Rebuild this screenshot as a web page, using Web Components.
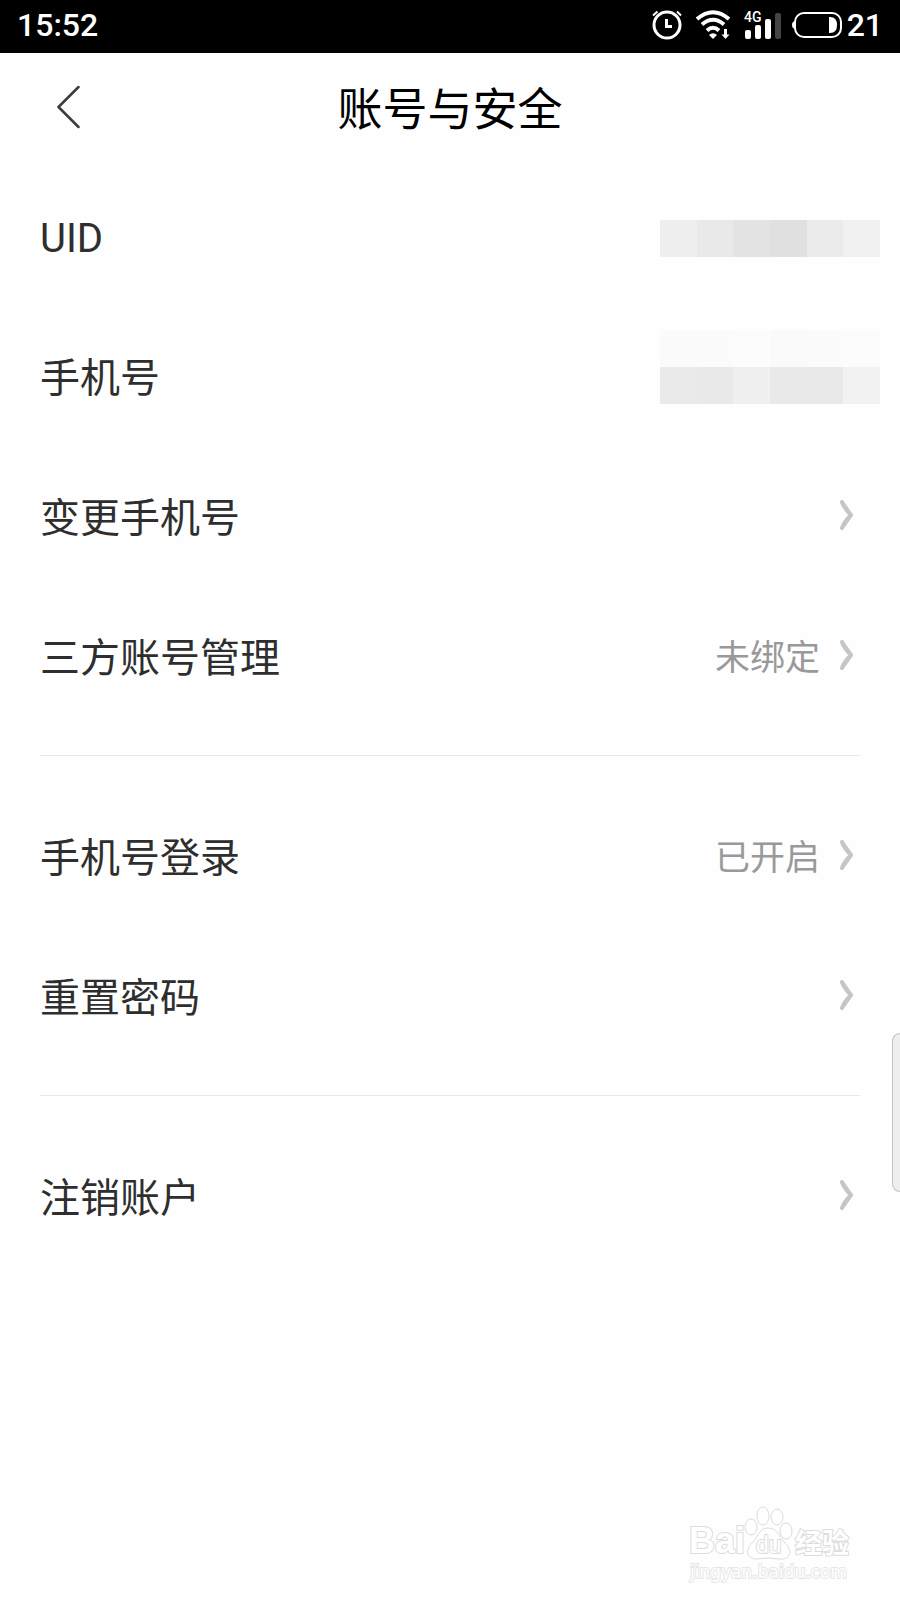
<!DOCTYPE html>
<html lang="zh-CN">
<head>
<meta charset="utf-8">
<meta name="viewport" content="width=device-width, initial-scale=1">
<title>账号与安全</title>
<style>
    body {
        margin: 0;
        background: #fefefe;
        font-family: Roboto, "Noto Sans CJK SC", sans-serif;
    }
</style>
</head>
<body>
<account-page>
    <status-bar slot="status" time="15:52" battery="21"></status-bar>
    <page-header slot="header">账号与安全</page-header>
    <setting-group>
        <setting-row>UID
            <mosaic-block class="uid" slot="value" colors="#eeeeee #e9e9e9 #e3e3e3 #e0e0e0 #ebebeb #f1f1f1"></mosaic-block>
        </setting-row>
        <setting-row>手机号
            <mosaic-block class="phone" slot="value" colors="#fbfbfb #fbfbfb #fcfcfc #fafafa #fbfbfb #fcfcfc #eaeaea #e9e9e9 #f0f0f0 #e9e9e9 #e9e9e9 #f2f2f2"></mosaic-block>
        </setting-row>
        <setting-row link>变更手机号</setting-row>
        <setting-row link>三方账号管理<span slot="value">未绑定</span></setting-row>
    </setting-group>
    <setting-group>
        <setting-row link>手机号登录<span slot="value">已开启</span></setting-row>
        <setting-row link>重置密码</setting-row>
    </setting-group>
    <setting-group>
        <setting-row link>注销账户</setting-row>
    </setting-group>
    <edge-handle slot="overlay"></edge-handle>
    <water-mark slot="overlay"></water-mark>
</account-page>

<script>
class AccountPage extends HTMLElement {
    constructor() {
        super();
        this.attachShadow({ mode: 'open' });
    }
    connectedCallback() {
        this.shadowRoot.innerHTML = /*html*/ `
        <style>
            :host {
                display: flex;
                flex-direction: column;
                position: relative;
                min-height: 100vh;
                overflow: hidden;
            }
            main {
                padding-top: 5px;
            }
        </style>
        <slot name="status"></slot>
        <slot name="header"></slot>
        <main><slot></slot></main>
        <slot name="overlay"></slot>
        `;
    }
}
customElements.define('account-page', AccountPage);

class StatusBar extends HTMLElement {
    constructor() {
        super();
        this.attachShadow({ mode: 'open' });
    }
    connectedCallback() {
        this.shadowRoot.innerHTML = /*html*/ `
        <style>
            :host {
                display: flex;
                align-items: center;
                justify-content: space-between;
                height: 53px;
                box-sizing: border-box;
                padding: 0 17px 4px 17px;
                background: #000;
                color: #fff;
                font-size: 32px;
                font-weight: 500;
                line-height: 48px;
            }
            .icons, .power {
                display: flex;
                align-items: center;
            }
            .icons {
                gap: 10px;
            }
            .power {
                gap: 5px;
            }
            svg {
                display: block;
                fill: none;
                stroke: #fff;
            }
            .solid {
                fill: #fff;
                stroke: none;
            }
        </style>
        <span>${this.getAttribute('time')}</span>
        <div class="icons">
            <svg width="32" height="30" viewBox="0 0 32 30" stroke-width="3" aria-hidden="true">
                <circle cx="15" cy="15" r="13"/>
                <path d="M14.500 9v7.500H20"/>
                <path d="M1 5.500 5.500 1.500M25 1.500 29 5.500" stroke-width="2"/>
            </svg>
            <svg width="38" height="30" viewBox="0 0 38 30" stroke-width="4" aria-hidden="true">
                <path d="M3 9Q19-4.500 35 9"/>
                <path d="M8 14.500Q19 5 30 14.500"/>
                <path d="M13 20.500Q19 15 25 20.500"/>
                <path class="solid" d="M15 25Q19 21.500 23 25L19 29Z"/>
                <path d="M31.500 19v8" stroke-width="3"/>
                <path class="solid" d="M27.500 24.500h8l-4 4.500z"/>
            </svg>
            <svg width="40" height="30" viewBox="0 0 40 30" aria-hidden="true">
                <text class="solid" x="2" y="12" font-size="14" font-weight="500">4G</text>
                <g class="solid">
                    <rect x="3" y="20" width="6" height="9" rx="2"/>
                    <rect x="13" y="15" width="6" height="14" rx="2"/>
                    <rect x="23" y="9" width="6" height="20" rx="2"/>
                    <rect x="33" y="3" width="6" height="26" rx="2" fill="#444"/>
                </g>
            </svg>
            <div class="power">
                <svg width="50" height="26" viewBox="0 0 50 26" stroke-width="2" aria-hidden="true">
                    <rect x="3" y="1" width="46" height="24" rx="9"/>
                    <path class="solid" d="M4 9Q0 9 0 13T4 17Z"/>
                    <path class="solid" d="M37 5h1q7 0 7 8t-7 8h-1z"/>
                </svg>
                <span>${this.getAttribute('battery')}</span>
            </div>
        </div>
        `;
    }
}
customElements.define('status-bar', StatusBar);

class PageHeader extends HTMLElement {
    constructor() {
        super();
        this.attachShadow({ mode: 'open' });
    }
    connectedCallback() {
        this.shadowRoot.innerHTML = /*html*/ `
        <style>
            :host {
                display: grid;
                grid-template-columns: 96px 1fr 96px;
                align-items: center;
                height: 108px;
                color: #000;
            }
            button {
                display: flex;
                justify-content: flex-end;
                padding: 16px;
                border: 0;
                background: none;
            }
            h1 {
                margin: 0;
                padding-top: 8px;
                font-size: 45px;
                font-weight: 400;
                line-height: 64px;
                text-align: center;
            }
        </style>
        <button type="button" aria-label="返回">
            <svg width="24" height="44" viewBox="0 0 24 44" fill="none" stroke="#3c3c3c" stroke-width="2.500" stroke-linecap="round" stroke-linejoin="round">
                <path d="M22.500 2 2.500 22l20 20"/>
            </svg>
        </button>
        <h1><slot></slot></h1>
        `;
    }
}
customElements.define('page-header', PageHeader);

class SettingGroup extends HTMLElement {
    constructor() {
        super();
        this.attachShadow({ mode: 'open' });
    }
    connectedCallback() {
        this.shadowRoot.innerHTML = /*html*/ `
        <style>
            :host {
                display: block;
            }
            :host(:not(:last-of-type))::after {
                content: "";
                display: block;
                height: 1px;
                margin: 29px 40px 30px;
                background: #e9e9e9;
            }
        </style>
        <slot></slot>
        `;
    }
}
customElements.define('setting-group', SettingGroup);

class SettingRow extends HTMLElement {
    constructor() {
        super();
        this.attachShadow({ mode: 'open' });
    }
    connectedCallback() {
        const link = this.hasAttribute('link');
        const tag = link ? 'button type="button"' : 'div';
        const arrow = /*html*/ `
            <svg width="15" height="32" viewBox="0 0 15 32" fill="none" stroke="#c6c6c6" stroke-width="4" stroke-linecap="round" stroke-linejoin="round" aria-hidden="true">
                <path d="M3 2Q5 8 12 15 5 22 3 28M3 2Q7 8 12 15 7 22 3 28"/>
            </svg>`;
        this.shadowRoot.innerHTML = /*html*/ `
        <style>
            :host {
                display: block;
            }
            .row {
                display: flex;
                align-items: center;
                justify-content: space-between;
                box-sizing: border-box;
                width: 100%;
                height: 140px;
                padding: 0 20px 0 40px;
                border: 0;
                background: none;
                color: #2e2e2e;
                font: inherit;
                font-size: 40px;
                line-height: 56px;
                text-align: left;
            }
            button.row {
                padding-right: 46px;
            }
            .label, ::slotted(span) {
                padding-top: 5px;
            }
            .end {
                display: flex;
                align-items: center;
                gap: 19px;
                color: #999;
                font-size: 35px;
            }
            svg {
                display: block;
            }
        </style>
        <${tag} class="row">
            <span class="label"><slot></slot></span>
            <span class="end"><slot name="value"></slot>${link ? arrow : ''}</span>
        </${link ? 'button' : 'div'}>
        `;
    }
}
customElements.define('setting-row', SettingRow);

// hidden value, six blocks per line
class MosaicBlock extends HTMLElement {
    constructor() {
        super();
        this.attachShadow({ mode: 'open' });
    }
    connectedCallback() {
        const cells = this.getAttribute('colors').split(' ')
            .map(color => `<i style="background:${color}"></i>`).join('');
        this.shadowRoot.innerHTML = /*html*/ `
        <style>
            :host {
                display: grid;
                grid-template-columns: repeat(6, 1fr);
                grid-auto-rows: 37px;
                width: 220px;
            }
            :host(.uid) {
                margin-top: 4px;
            }
            :host(.phone) {
                margin-bottom: 18px;
            }
        </style>
        ${cells}
        `;
    }
}
customElements.define('mosaic-block', MosaicBlock);

class EdgeHandle extends HTMLElement {
    constructor() {
        super();
        this.attachShadow({ mode: 'open' });
    }
    connectedCallback() {
        this.shadowRoot.innerHTML = /*html*/ `
        <style>
            :host {
                display: block;
                position: absolute;
                right: 0;
                bottom: 408px;
                width: 8px;
                height: 159px;
                box-sizing: border-box;
                border: 1px solid #c4c4c4;
                border-right: 0;
                border-radius: 8px 0 0 8px;
                background: #eee;
            }
        </style>
        `;
    }
}
customElements.define('edge-handle', EdgeHandle);

class WaterMark extends HTMLElement {
    constructor() {
        super();
        this.attachShadow({ mode: 'open' });
    }
    connectedCallback() {
        this.shadowRoot.innerHTML = /*html*/ `
        <style>
            :host {
                display: block;
                position: absolute;
                right: 46px;
                bottom: 16px;
                pointer-events: none;
            }
            svg {
                display: block;
                overflow: visible;
                fill: #fff;
                stroke: #dcdcdc;
                font-family: "Liberation Sans", "Noto Sans CJK SC", sans-serif;
            }
            text {
                paint-order: stroke;
                stroke-width: 2px;
            }
            .url {
                stroke: #e6e6e6;
                font-family: "DejaVu Sans", sans-serif;
            }
        </style>
        <svg width="164" height="84" viewBox="0 0 164 84">
            <text x="-1" y="53" font-size="36" font-weight="700">Bai</text>
            <ellipse cx="61" cy="27" rx="6" ry="8"/>
            <ellipse cx="73" cy="16" rx="6" ry="9"/>
            <ellipse cx="87" cy="17" rx="6" ry="8"/>
            <ellipse cx="96" cy="31" rx="6" ry="8"/>
            <path d="M78 28C87 28 89 36 94 42C103 49 101 60 90 59Q78 57 67 59C56 59 55 49 63 42C68 36 70 28 78 28Z"/>
            <text x="66" y="53" font-size="23">du</text>
            <text x="105" y="53" font-size="27" font-weight="700">经验</text>
            <text class="url" x="0" y="78" font-size="17">jingyan.baidu.com</text>
        </svg>
        `;
    }
}
customElements.define('water-mark', WaterMark);
</script>
</body>
</html>
